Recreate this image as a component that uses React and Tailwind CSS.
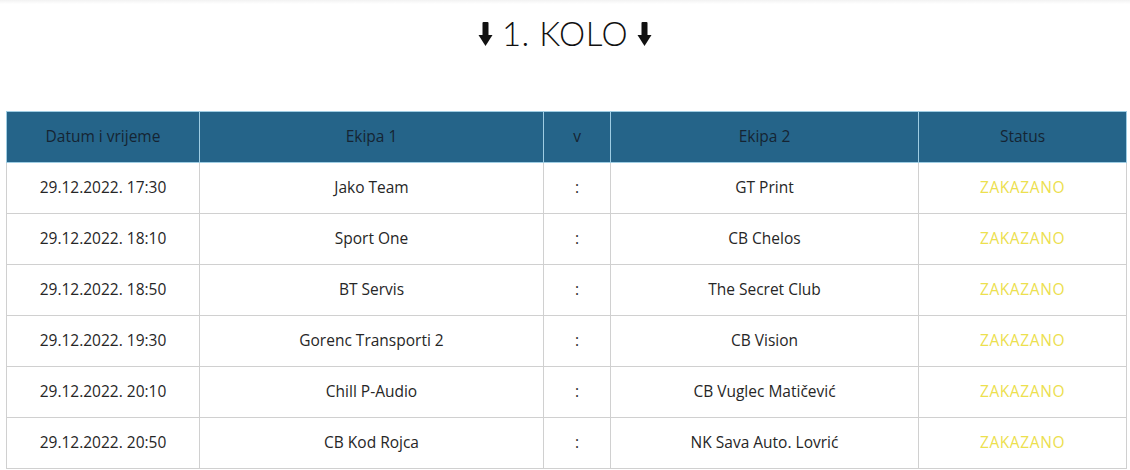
import React from 'react';

const rows = [
  ['29.12.2022. 17:30', 'Jako Team', 'GT Print'],
  ['29.12.2022. 18:10', 'Sport One', 'CB Chelos'],
  ['29.12.2022. 18:50', 'BT Servis', 'The Secret Club'],
  ['29.12.2022. 19:30', 'Gorenc Transporti 2', 'CB Vision'],
  ['29.12.2022. 20:10', 'Chill P-Audio', 'CB Vuglec Matičević'],
  ['29.12.2022. 20:50', 'CB Kod Rojca', 'NK Sava Auto. Lovrić'],
];

function Arrow() {
  return (
    <svg width="15" height="26" viewBox="0 0 15 26" className="inline-block">
      <rect x="4.5" y="1" width="6" height="14" rx="1" fill="#111" />
      <path d="M0.5 14 L14.5 14 L7.5 25 Z" fill="#111" />
    </svg>
  );
}

export default function App() {
  return (
    <div className="w-[1130px] h-[470px] bg-white overflow-hidden font-[family-name:'Open_Sans',sans-serif]">
      <div className="h-[4px] bg-gradient-to-b from-[#f2f2f2] to-white" />
      <div className="flex items-center justify-center gap-[9px] pt-[2px] h-[58px] text-[33px] text-[#111]">
        <Arrow />
        <span className="font-[family-name:Lato,sans-serif] font-light tracking-[0.5px]">1. KOLO</span>
        <Arrow />
      </div>
      <div className="pt-[49px] pl-[6px]">
        <table className="w-[1120px] border-collapse table-fixed text-[15.5px] text-center">
          <colgroup>
            <col className="w-[193px]" />
            <col className="w-[344px]" />
            <col className="w-[67px]" />
            <col className="w-[308px]" />
            <col className="w-[208px]" />
          </colgroup>
          <thead>
            <tr className="h-[51px] bg-[#256489] text-[#152433]">
              {['Datum i vrijeme', 'Ekipa 1', 'v', 'Ekipa 2', 'Status'].map((h) => (
                <th key={h} className="font-normal border border-[#9fcde3] text-[15.5px]">
                  {h}
                </th>
              ))}
            </tr>
          </thead>
          <tbody>
            {rows.map((r) => (
              <tr key={r[0]} className="h-[51px] text-[#262626]">
                <td className="border border-[#d0d0d0]">{r[0]}</td>
                <td className="border border-[#d0d0d0]">{r[1]}</td>
                <td className="border border-[#d0d0d0]">:</td>
                <td className="border border-[#d0d0d0]">{r[2]}</td>
                <td className="border border-[#d0d0d0] text-[#ece04e] text-[15.5px] tracking-[0.6px]">ZAKAZANO</td>
              </tr>
            ))}
          </tbody>
        </table>
      </div>
    </div>
  );
}
